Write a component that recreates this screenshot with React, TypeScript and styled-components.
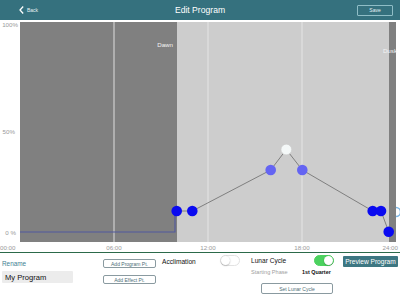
import React, { useState } from "react";
import styled, { createGlobalStyle } from "styled-components";

const Global = createGlobalStyle`
  html, body {
    margin: 0;
    padding: 0;
    background: #ffffff;
    font-family: "Liberation Sans", Arial, sans-serif;
  }
`;

const Page = styled.div`
  width: 400px;
  height: 300px;
  overflow: hidden;
  background: #ffffff;
`;

const Header = styled.div`
  height: 20px;
  background: #35717e;
  display: grid;
  grid-template-columns: 1fr auto 1fr;
  align-items: center;
  color: #ffffff;
`;

const BackLink = styled.div`
  display: flex;
  align-items: center;
  gap: 3px;
  padding-left: 19px;
  font-size: 5px;
  color: #e8f2f4;
`;

const Title = styled.div`
  font-size: 8.6px;
`;

const SaveButton = styled.div`
  justify-self: end;
  margin-right: 7px;
  width: 34px;
  height: 9px;
  border: 1px solid #8fbdc6;
  border-radius: 1px;
  font-size: 5px;
  display: flex;
  align-items: center;
  justify-content: center;
  color: #e8f2f4;
`;

const ChartArea = styled.div`
  height: 232px;
  border-bottom: 1px solid #2c6a4a;
`;

const Controls = styled.div`
  display: flex;
  padding: 2px 0 0 2px;
  height: 45px;
`;

const Column = styled.div<{ $w: number; $ml?: number }>`
  width: ${(p) => p.$w}px;
  margin-left: ${(p) => p.$ml ?? 0}px;
  display: flex;
  flex-direction: column;
`;

const LinkText = styled.div`
  font-size: 6.4px;
  color: #3f7f93;
  margin-top: 5px;
  height: 11px;
`;

const NameBox = styled.div`
  height: 12px;
  background: #ececec;
  border-radius: 1px;
  font-size: 7.6px;
  color: #111;
  display: flex;
  align-items: center;
  padding-left: 3px;
`;

const SmallButton = styled.div<{ $top: number; $w?: number; $h?: number }>`
  margin-top: ${(p) => p.$top}px;
  width: ${(p) => p.$w ?? 51}px;
  height: ${(p) => p.$h ?? 7}px;
  border: 1px solid #8a9aa0;
  border-radius: 2px;
  font-size: 5px;
  color: #4e6f78;
  display: flex;
  align-items: center;
  justify-content: center;
  white-space: nowrap;
`;

const Row = styled.div<{ $top?: number }>`
  display: flex;
  align-items: center;
  margin-top: ${(p) => p.$top ?? 0}px;
`;

const Label = styled.div<{ $w?: number; $size?: number; $color?: string; $bold?: boolean }>`
  width: ${(p) => (p.$w ? `${p.$w}px` : "auto")};
  font-size: ${(p) => p.$size ?? 6.6}px;
  color: ${(p) => p.$color ?? "#111"};
  font-weight: ${(p) => (p.$bold ? 700 : 400)};
  white-space: nowrap;
`;

const Toggle = styled.div<{ $on: boolean }>`
  position: relative;
  width: 20px;
  height: 11px;
  border-radius: 6px;
  box-sizing: border-box;
  background: ${(p) => (p.$on ? "#4cd25f" : "#ffffff")};
  border: 1px solid ${(p) => (p.$on ? "#4cd25f" : "#e2e2e2")};
  &::after {
    content: "";
    position: absolute;
    top: 0;
    left: ${(p) => (p.$on ? "9px" : "0")};
    width: 9px;
    height: 9px;
    border-radius: 50%;
    background: #ffffff;
    box-shadow: 0 0.5px 1.5px rgba(0, 0, 0, 0.35);
  }
`;

const PreviewButton = styled.div`
  margin-top: 1px;
  width: 55px;
  height: 11px;
  background: #3d7782;
  border-radius: 1px;
  color: #ffffff;
  font-size: 6.6px;
  display: flex;
  align-items: center;
  justify-content: center;
  white-space: nowrap;
`;

// hour -> x on the plot (svg starts at page y=20)
const X0 = 20;
const HOUR = 94 / 6;
const hx = (h: number) => X0 + h * HOUR;
const PLOT_TOP = 2;
const PLOT_BOTTOM = 222;

const points = [
  { x: 176.7, y: 191, c: "#0a0af0" },
  { x: 192.3, y: 191, c: "#0a0af0" },
  { x: 270.7, y: 150, c: "#6464f2" },
  { x: 286.3, y: 129.5, c: "#f4f8f8", s: "#c8c8c8" },
  { x: 302.3, y: 150, c: "#6464f2" },
  { x: 372.7, y: 191, c: "#0a0af0" },
  { x: 381, y: 191, c: "#0a0af0" },
  { x: 388.7, y: 211.7, c: "#0a0af0" },
];

function Chart() {
  const axis = { fontSize: 6.2, fill: "#9a9a9a", fontFamily: "Liberation Sans, Arial, sans-serif" };
  const note = { fontSize: 6.2, fill: "#f4f4f4", fontFamily: "Liberation Sans, Arial, sans-serif" };
  return (
    <svg width="400" height="232" viewBox="0 0 400 232">
      <rect x={X0} y={PLOT_TOP} width={157} height={220} fill="#808080" />
      <rect x={177} y={PLOT_TOP} width={212} height={220} fill="#cdcdcd" />
      {[6, 12, 18].map((h) => (
        <line key={h} x1={hx(h)} x2={hx(h)} y1={PLOT_TOP} y2={PLOT_BOTTOM} stroke="#e9e9e9" strokeWidth="0.9" />
      ))}
      <circle cx={396} cy={192} r={4.5} fill="#ffffff" stroke="#7db7e6" strokeWidth="1.4" />
      <rect x={389} y={PLOT_TOP} width={7} height={220} fill="#808080" />

      <text x={173} y={26.5} textAnchor="end" {...note}>Dawn</text>
      <text x={397} y={33} textAnchor="end" {...note}>Dusk</text>

      <polyline points="20,212 175,212 175,191" fill="none" stroke="#50589e" strokeWidth="1.1" />
      <polyline
        points={points.map((p) => `${p.x},${p.y}`).join(" ")}
        fill="none"
        stroke="#4a4a4a"
        strokeWidth="0.6"
      />
      {points.map((p, i) => (
        <circle key={i} cx={p.x} cy={p.y} r={5.3} fill={p.c} stroke={p.s ?? "none"} strokeWidth="0.5" />
      ))}

      <text x={18} y={7} textAnchor="end" {...axis}>100%</text>
      <text x={15} y={114} textAnchor="end" {...axis}>50%</text>
      <text x={16} y={215} textAnchor="end" {...axis}>0 %</text>

      <text x={0} y={230} {...axis}>00:00</text>
      <text x={hx(6)} y={230} textAnchor="middle" {...axis}>06:00</text>
      <text x={hx(12)} y={230} textAnchor="middle" {...axis}>12:00</text>
      <text x={hx(18)} y={230} textAnchor="middle" {...axis}>18:00</text>
      <text x={398} y={230} textAnchor="end" {...axis}>24:00</text>
    </svg>
  );
}

export default function App() {
  const [acclimation] = useState(false);
  const [lunar] = useState(true);
  return (
    <Page>
      <Global />
      <Header>
        <BackLink>
          <svg width="5" height="8" viewBox="0 0 5 8">
            <path d="M4.2 0.5 L1 4 L4.2 7.5" fill="none" stroke="#ffffff" strokeWidth="1.3" />
          </svg>
          Back
        </BackLink>
        <Title>Edit Program</Title>
        <SaveButton>Save</SaveButton>
      </Header>
      <ChartArea>
        <Chart />
      </ChartArea>
      <Controls>
        <Column $w={71}>
          <LinkText>Rename</LinkText>
          <NameBox>My Program</NameBox>
        </Column>
        <Column $w={53} $ml={30}>
          <SmallButton $top={4}>Add Program Pt.</SmallButton>
          <SmallButton $top={7}>Add Effect Pt.</SmallButton>
        </Column>
        <Column $w={78} $ml={6}>
          <Row>
            <Label $w={58} style={{ marginTop: 1 }}>Acclimation</Label>
            <Toggle $on={acclimation} />
          </Row>
        </Column>
        <Column $w={83} $ml={11}>
          <Row>
            <Label $w={63}>Lunar Cycle</Label>
            <Toggle $on={lunar} />
          </Row>
          <Row $top={3}>
            <Label $w={51} $size={5.6} $color="#a0a0a0">Starting Phase</Label>
            <Label $size={5.4} $bold>1st Quarter</Label>
          </Row>
          <Row $top={8} style={{ paddingLeft: 10 }}>
            <SmallButton $top={0} $w={70} $h={9}>Set Lunar Cycle</SmallButton>
          </Row>
        </Column>
        <Column $w={55} $ml={9}>
          <PreviewButton>Preview Program</PreviewButton>
        </Column>
      </Controls>
    </Page>
  );
}
